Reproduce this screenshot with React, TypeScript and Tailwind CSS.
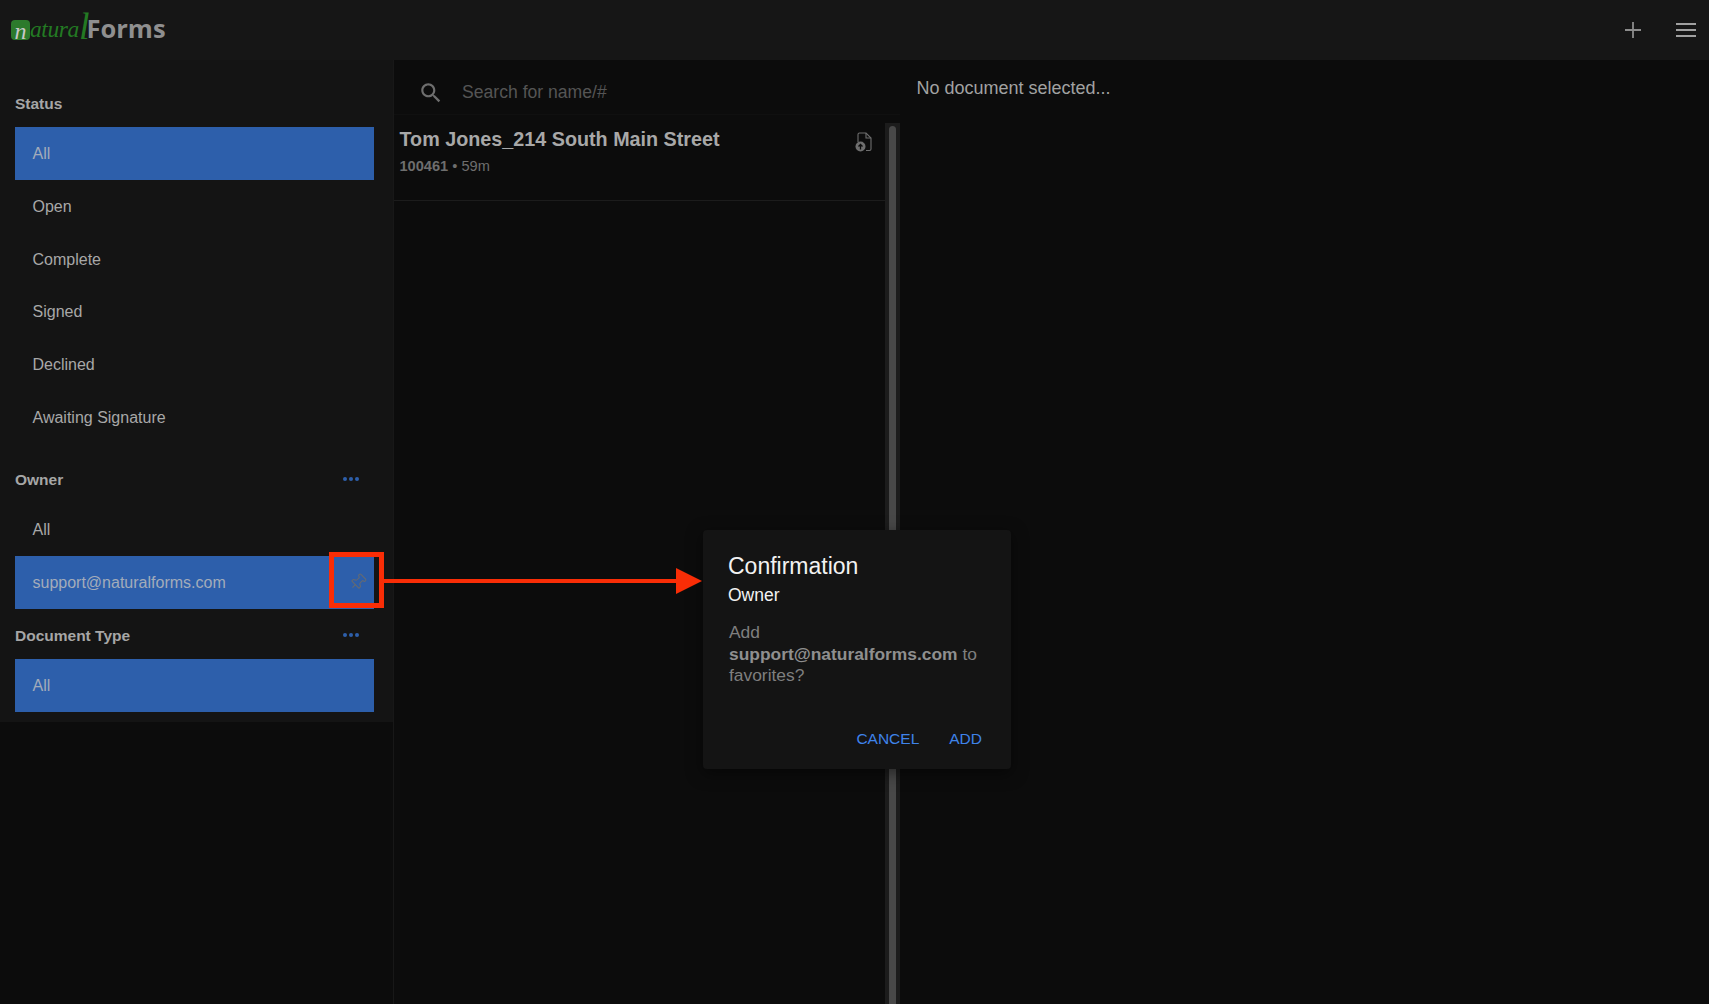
import { Pin } from "lucide-react";

const font = "font-['Liberation_Sans',Arial,sans-serif]";

function Row({ label, active, pin, h }: { label: string; active?: boolean; pin?: boolean; h?: boolean }) {
  return (
    <div
      className={`flex items-center justify-between pl-[17.5px] pr-[7px] text-[16px] ${h ? "h-[53px]" : "h-[52.8px]"} ${
        active ? "bg-[#2d5fab] text-[#a3acba]" : "text-[#a8a8a8]"
      }`}
    >
      <span>{label}</span>
      {pin && <Pin size={18} strokeWidth={1.4} className="-mt-[2px] rotate-45 text-[#666a70]" />}
    </div>
  );
}

function Heading({ label, dots }: { label: string; dots?: boolean }) {
  return (
    <div className="flex h-[24px] items-center justify-between pr-[15px] text-[15.5px] font-bold text-[#a6a6a6]">
      <span>{label}</span>
      {dots && (
        <span className="-mt-[1px] flex gap-[2px]">
          <i className="h-[4px] w-[4px] rounded-full bg-[#2d5fab]" />
          <i className="h-[4px] w-[4px] rounded-full bg-[#2d5fab]" />
          <i className="h-[4px] w-[4px] rounded-full bg-[#2d5fab]" />
        </span>
      )}
    </div>
  );
}

export default function App() {
  return (
    <div className={`relative flex h-[1004px] w-[1709px] flex-col overflow-hidden bg-[#0c0c0c] ${font}`}>
      <header className="flex h-[60px] shrink-0 items-center justify-between bg-[#161616] pl-[11px] pr-[13px]">
        <div className="flex items-center">
          <span className="flex h-[20px] w-[19px] items-end justify-center rounded-[4px] bg-[#2c7a2c] font-['Liberation_Serif',serif] text-[24px] italic leading-[18px] text-[#c8c8c8]">
            n
          </span>
          <span className="font-['Liberation_Serif',serif] text-[23.5px] italic leading-none tracking-[-0.4px] text-[#237a23]">
            atura
          </span>
          <span className="-mt-[8px] -mr-[3px] font-['Liberation_Serif',serif] text-[38px] italic leading-none text-[#237a23]">
            l
          </span>
          <span className="-mt-[3px] font-['Open_Sans',sans-serif] text-[25.5px] font-bold leading-none text-[#8f8f8f]">Forms</span>
        </div>
        <div className="flex items-center gap-[35px]">
          <svg width="16" height="16" viewBox="0 0 16 16">
            <path d="M8 0v16M0 8h16" stroke="#8c8c8c" strokeWidth="1.8" />
          </svg>
          <div className="flex w-[20px] flex-col gap-[3.5px]">
            <i className="h-[2.5px] bg-[#a0a0a0]" />
            <i className="h-[2.5px] bg-[#a0a0a0]" />
            <i className="h-[2.5px] bg-[#a0a0a0]" />
          </div>
        </div>
      </header>

      <div className="flex min-h-0 flex-1">
        <aside className="w-[393px] shrink-0">
          <div className="h-[662px] bg-[#141414] pl-[15px] pr-[19px] pt-[32px]">
            <Heading label="Status" />
            <div className="mt-[11px]">
              <Row label="All" active h />
              <Row label="Open" h />
              <Row label="Complete" h />
              <Row label="Signed" />
              <Row label="Declined" />
              <Row label="Awaiting Signature" />
            </div>
            <div className="mt-[23px]">
              <Heading label="Owner" dots />
            </div>
            <div className="mt-[12px]">
              <Row label="All" />
              <Row label="support@naturalforms.com" active pin h />
            </div>
            <div className="mt-[14px]">
              <Heading label="Document Type" dots />
            </div>
            <div className="mt-[12px]">
              <Row label="All" active h />
            </div>
          </div>
        </aside>

        <section className="flex w-[507px] shrink-0 flex-col border-l border-[#181818]">
          <div className="flex h-[55px] shrink-0 items-center border-b border-[#101010] pl-[24px] pt-[11px]">
            <svg width="26" height="26" viewBox="0 0 24 24" fill="#6e6e6e">
              <path d="M15.5 14h-.79l-.28-.27C15.41 12.59 16 11.11 16 9.5 16 5.91 13.09 3 9.5 3S3 5.91 3 9.5 5.91 16 9.5 16c1.61 0 3.09-.59 4.23-1.57l.27.28v.79l5 4.99L20.49 19l-4.99-5zm-6 0C7.01 14 5 11.99 5 9.5S7.01 5 9.5 5 14 7.01 14 9.5 11.99 14 9.5 14z" />
            </svg>
            <span className="ml-[18px] text-[17.6px] text-[#555555]">Search for name/#</span>
          </div>
          <div className="flex min-h-0 flex-1 pt-[8px]">
            <div className="h-[78px] flex-1 border-b border-[#1c1c1c] pt-[4px]">
              <div className="flex items-start justify-between pl-[5.5px] pr-[13px]">
                <div>
                  <div className="text-[19.75px] font-bold leading-[24px] text-[#a8a8a8]">
                    Tom Jones_214 South Main Street
                  </div>
                  <div className="mt-[6px] text-[14.6px] leading-[18px] text-[#6e6e6e]">
                    <b>100461</b> • 59m
                  </div>
                </div>
                <svg width="18" height="20" viewBox="0 0 18 20" fill="none" className="mt-[5px] -ml-[1px]" stroke="#6e6e6e" strokeWidth="1.1">
                  <path d="M3 10V2.5C3 1.5 3.5 1 4.5 1H11l5 5v11c0 1-.5 1.5-1.5 1.5H11" />
                  <path d="M11 1v5h5" />
                  <circle cx="5.5" cy="14.5" r="5" fill="#6e6e6e" stroke="none" />
                  <path d="M5.5 17.5v-5M3.5 14.5l2-2 2 2" stroke="#0c0c0c" strokeWidth="1.3" />
                </svg>
              </div>
            </div>
            <div className="-ml-[1px] flex w-[15px] shrink-0 justify-center bg-[#1c1c1c] px-[4px] pt-[3px]">
              <div className="h-full w-[8px] rounded-t-[4px] bg-[#484848]" />
            </div>
          </div>
        </section>

        <main className="flex-1 pl-[16.5px] pt-[17px] text-[18px] leading-[22px] text-[#a2a2a2]">
          No document selected...
        </main>
      </div>

      <div className="absolute left-[703px] top-[530px] flex h-[239px] w-[308px] flex-col rounded-[4px] bg-[#141414] pl-[25px] pr-[29px] pt-[22px] shadow-[0_4px_16px_rgba(0,0,0,0.5)]">
        <div className="text-[23px] leading-[28px] text-[#f2f2f2]">Confirmation</div>
        <div className="mt-[4px] text-[17.5px] leading-[22px] text-[#f2f2f2]">Owner</div>
        <div className="ml-[1px] mt-[16px] text-[17.4px] leading-[21.7px] text-[#7f7f7f]">
          Add
          <br />
          <b className="text-[#8f8f8f]">support@naturalforms.com</b> to favorites?
        </div>
        <div className="mt-auto mb-[20px] flex justify-end gap-[30px] text-[15.5px] leading-[20px] text-[#3f83ea]">
          <span>CANCEL</span>
          <span>ADD</span>
        </div>
      </div>

      <div className="absolute left-[329px] top-[552px] h-[56px] w-[55px] border-[5px] border-[#f92d06]" />
      <svg className="absolute left-[384px] top-[565px]" width="320" height="32" viewBox="0 0 320 32">
        <path d="M0 14h294v4H0z" fill="#f92d06" />
        <path d="M292 3l26 13-26 13z" fill="#f92d06" />
      </svg>
    </div>
  );
}
